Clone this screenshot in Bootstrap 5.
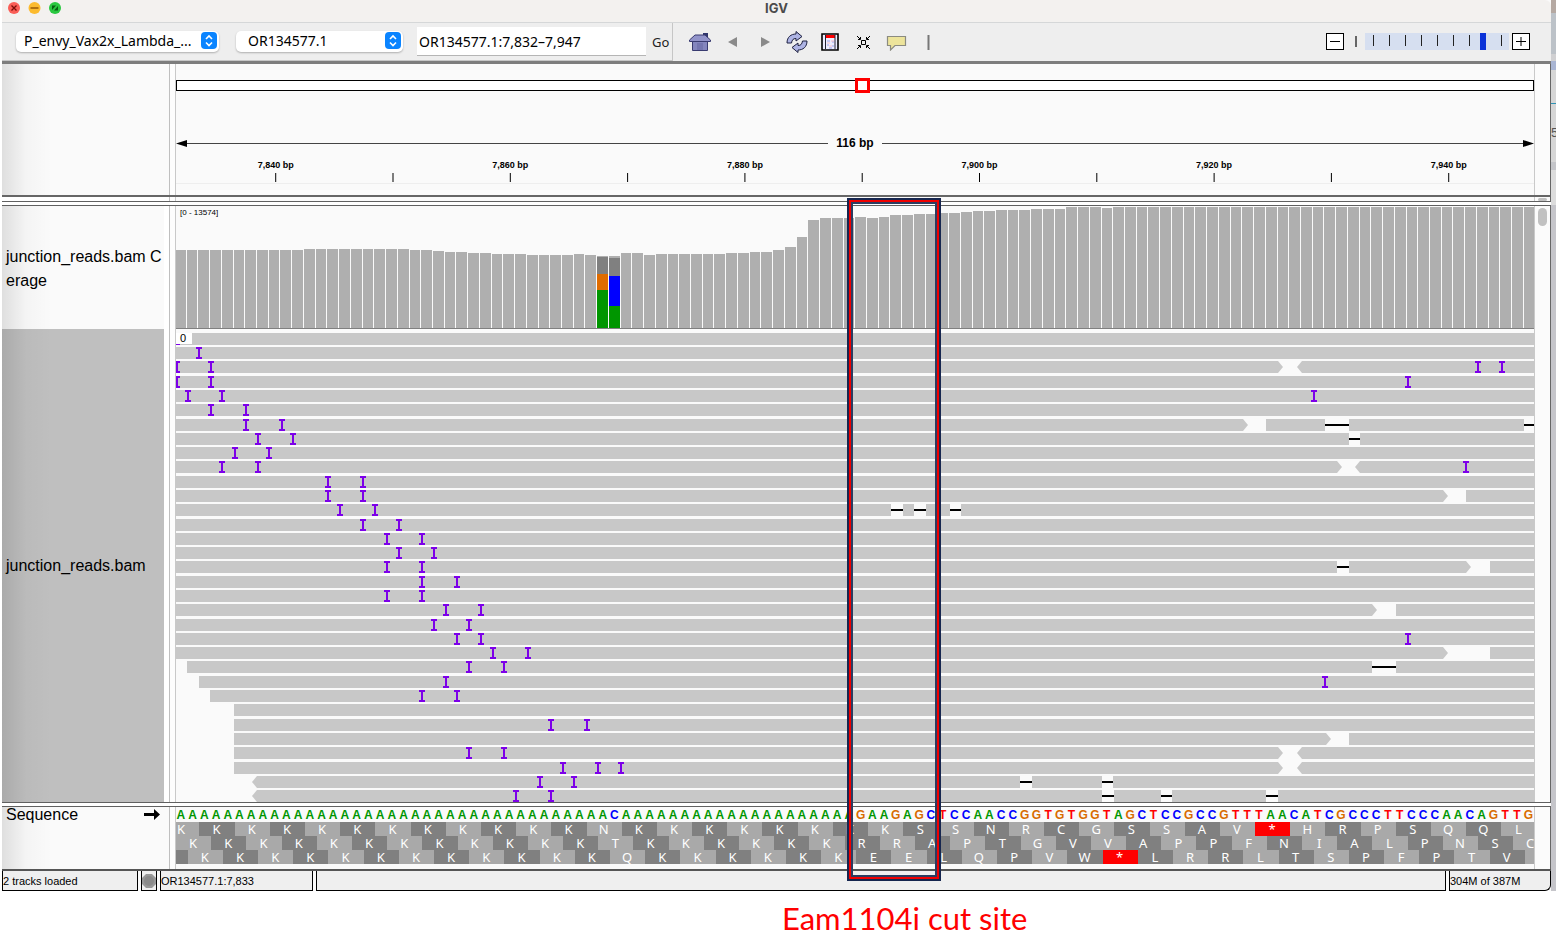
<!DOCTYPE html>
<html lang="en">
<head>
<meta charset="utf-8">
<meta name="viewport" content="width=device-width, initial-scale=1">
<title>IGV</title>
<link href="https://cdn.jsdelivr.net/npm/bootstrap@5.3.0/dist/css/bootstrap.min.css" rel="stylesheet">
<style>
body{font-family:"Liberation Sans",Arial,sans-serif;color:#000;background:#fff;overflow-x:hidden}
.igv-window{background:#fafafa;margin-left:2px;min-width:0}
.desk{width:5px;background:linear-gradient(#b5a9a2 0 13px,#bcc2c8 13px 54px,#d0d0d2 54px 61px,#a9b5d3 61px 70px,#d6d6d6 70px 103px,#2f93b5 103px 104px,#d6d6d6 104px 162px,#c4c5c9 162px 170px,#dcdcdc 170px 205px,#c5c5ca 205px);font-size:13px;color:#555}
.desk span{display:block;padding-top:123px}
.titlebar{height:22px;background:#f3f1ef;font:bold 13px/16px Inter,sans-serif;color:#4b4b4b;position:relative;border-radius:0 6px 0 0}
.lights{position:absolute;left:6px;top:2px}
.tools{height:39px;background:#eee;border-top:1px solid #d5d7d8;font-family:"Noto Sans",sans-serif;font-size:14px}
.finder{border-right:1px solid #c6c6c6;border-bottom:1px solid #c6c6c6}
.drop{position:relative;height:21px;width:203px;margin:0 17px 2px 14px}
.drop select{appearance:none;width:100%;height:21px;border:0;border-radius:5px;background:#fff;box-shadow:0 1px 2px #0004;padding:0 28px 0 8px;line-height:20px;color:#000}
.drop svg{position:absolute;right:1px;top:2px;pointer-events:none}
.drop.chrom{width:167px;margin:0 14px 2px 0}
.drop.chrom select{padding-left:12px}
.locus{width:229px;height:29px;border:0;border-bottom:1px solid #b5b5b5;background:#fff;padding:0 2px;color:#000}
.plain{border:0;background:none;padding:0;color:#222;line-height:0}
.go{font-size:13px;line-height:20px;padding:0 3px 0 6px}
.icons .plain svg,.icons>svg{display:block}
.zoombtn{width:18px;height:17px;border:1px solid #000;background:#fff;padding:0;line-height:0}
.zoomer{appearance:none;width:144px;height:17px;margin:0;background:repeating-linear-gradient(90deg,transparent 0 8px,#222 8px 9px,transparent 9px 16px) 0 2px/100% 11px no-repeat #d6dff0}
.zoomer::-webkit-slider-thumb{appearance:none;width:6px;height:17px;background:#0a32d8}
.zoomer::-moz-range-thumb{width:6px;height:17px;border:0;border-radius:0;background:#0a32d8}
.darkbar{height:3px;background:#7d7d7d}
.names{width:168px;flex:none;border-right:1px solid #bfbfbf;background:#fff;overflow:hidden}
.fade-l{background-image:linear-gradient(90deg,#0000001c,#00000006 24px,transparent 50px)}
.gut{width:6px;flex:none;background:#fdfdfd;border-right:1px solid #c9c9c9}
.plot{flex:1 1 0;min-width:0;background:#fafafa;overflow:hidden;position:relative}
.rail{width:17px;flex:none;border-left:1px solid #c9c9c9;border-right:1px solid #666;background:#fbfbfb}
.head{height:131px}
.ideo{margin-top:16px;height:11px;border:1px solid #000;background:#fff;position:relative}
.view{position:absolute;left:50%;top:-3px;width:15px;height:15px;border:3px solid red;background:#fff}
.span{height:16px;margin-top:44px;font-size:12px;font-weight:bold;line-height:16px}
.rule{height:1px;background:#444}
.pane-name{width:162px;font-size:16px;line-height:24px;padding-left:4px;white-space:nowrap;overflow:hidden}
.cov{height:123px}
.pane-name.cov{padding-top:39px}
.aln{height:473px}
.range{position:absolute;left:4px;top:1px;font-size:8px;line-height:12px}
.zero{position:absolute;left:0;top:4px;width:16px;height:11px;background:#fff;font-size:11px;line-height:11px;padding-left:4px}
.edge{height:1px;background:#606060}
.seqh{height:62px}
.bases,.amino{display:flex;white-space:nowrap}
.bases{height:14px;font-size:12px;font-weight:bold;line-height:15px;margin-top:1px}
.bases span{flex:0 0 calc(100% / 115.77);text-align:center;padding-right:2px}
.amino{height:14px;font:13px/14px "Noto Sans",sans-serif;color:#fff}
.amino span{flex:0 0 calc(300% / 115.77);height:14px;text-align:center;padding-right:1px}
.amino .two{flex-basis:calc(200% / 115.77);text-align:left;padding-left:1px}
.amino .one{flex-basis:calc(100% / 115.77)}
.lt{background:#a9a9a9}.dk{background:#808080}.stop{background:red}
.bA{color:#009600}.bC{color:#00f}.bG{color:#d86c00}.bT{color:red}
.status{height:20px;background:#fafafa;font-size:11px;line-height:21px;gap:3px}
.status>div{border:1px solid #000;border-top:0;background:#efefef;white-space:nowrap}
.cut{position:absolute;top:198px;left:calc(174px + (100% - 191px) * .494);width:94px;height:683px;border:2px solid #16264f;box-shadow:inset 0 0 0 2px #f00000,inset 0 0 0 4px #2c3c60;pointer-events:none}
.note{margin-left:50%;padding:9px 0 0 4px;color:red;font:31px/36px Lato,sans-serif}
.pill{display:block;background:#c1c1c1;border-radius:5px;margin-left:3px;width:9px}
</style>
</head>
<body>
<div class="d-flex">
<main class="igv-window flex-grow-1 position-relative">
  <header class="titlebar text-center">
    <svg class="lights" width="56" height="13" viewBox="0 0 56 13">
      <circle cx="6" cy="6" r="6" fill="#fa5d56"/><path d="M3.500 3.500l5 5m0-5l-5 5" stroke="#7a0d08" stroke-width="1.300"/>
      <circle cx="26.500" cy="6" r="6" fill="#fcbb2e"/><path d="M22.500 6h8" stroke="#985a06" stroke-width="1.500"/>
      <circle cx="47" cy="6" r="6" fill="#2ac840"/><path d="M44 3.500h4L44 8zM50 8.500h-4L50 4z" fill="#075f12"/>
    </svg>IGV
  </header>
  <nav class="tools d-flex align-items-stretch">
    <div class="finder d-flex align-items-center">
      <div class="drop"><select aria-label="Genome"><option>P_envy_Vax2x_Lambda_...</option></select>
        <svg width="17" height="17" viewBox="0 0 17 17"><rect width="16" height="17" rx="4" fill="#0a84ff"/><path d="M5 7l3-3 3 3M5 10.500l3 3 3-3" fill="none" stroke="#fff" stroke-width="1.600"/></svg></div>
      <div class="drop chrom"><select aria-label="Chromosome"><option>OR134577.1</option></select>
        <svg width="17" height="17" viewBox="0 0 17 17"><rect width="16" height="17" rx="4" fill="#0a84ff"/><path d="M5 7l3-3 3 3M5 10.500l3 3 3-3" fill="none" stroke="#fff" stroke-width="1.600"/></svg></div>
      <input class="locus" aria-label="Locus" value="OR134577.1:7,832–7,947">
      <button class="plain go">Go</button>
    </div>
    <div class="icons d-flex align-items-center ms-3">
      <button class="plain" aria-label="Home"><svg width="22" height="20" viewBox="0 0 22 20"><path d="M14 4V1h5v7z" fill="#30356c"/><path d="M.500 8L6 3h10l5.500 5v1.500H.500z" fill="#9294ca" stroke="#393b70"/><path d="M3.500 9.500h15v9h-15z" fill="#8486be" stroke="#393b70"/><path d="M8 11h6v7H8z" fill="#7476b0"/></svg></button>
      <button class="plain" style="margin-left:17px" aria-label="Back"><svg width="10" height="10"><path d="M9 0v10L0 5z" fill="#8a8a8a"/></svg></button>
      <button class="plain" style="margin-left:22px" aria-label="Forward"><svg width="10" height="10"><path d="M1 0v10l9-5z" fill="#8a8a8a"/></svg></button>
      <button class="plain" style="margin-left:16px" aria-label="Refresh"><svg width="22" height="22" viewBox="0 0 22 22"><g fill="#aeb4e4" stroke="#1d2040"><path d="M1 12C1 6 5 3 10 3V.500L16 5.500 10 10V7.500C7 7.500 6 9 5.500 12z"/><path d="M21 10c0 6-4 9-9 9v2.500L6 16.500 12 12v2.500c3 0 4-1.500 4.500-4.500z"/></g></svg></button>
      <button class="plain" style="margin-left:13px" aria-label="Region of interest"><svg width="18" height="18" viewBox="0 0 18 18"><path d="M1 1h16v16H1z" fill="#eef" stroke="#000" stroke-width="1.600"/><path d="M4 2h10v3H4z" fill="red"/><path d="M4.500 2v14M14 2v14" stroke="#223"/><path d="M6 8h3m2 1h2M6 12h2m3 1h2M8 15h3" stroke="#c3c8f5" stroke-width="2"/><path d="M6 10h3m1-2h3m-5 5h3" stroke="#f3bec5"/></svg></button>
      <button class="plain" style="margin-left:17px" aria-label="Fit data"><svg width="15" height="15" viewBox="0 0 15 15" fill="none" stroke="#000"><path d="M5.500 5.500h4v4h-4zM1 1l3 3M14 1l-3 3M1 14l3-3M14 14l-3-3M2 4.500h2.500V2M13 4.500h-2.500V2M2 10.500h2.500V13M13 10.500h-2.500V13"/></svg></button>
      <button class="plain" style="margin-left:15px" aria-label="Popup text"><svg width="21" height="18" viewBox="0 0 21 18"><path d="M1.500 3.500h18v9H9L4.500 17v-4.500h-3z" fill="#ede49b" stroke="#8b8b80" stroke-width="1.200"/></svg></button>
      <svg style="margin-left:20px" width="3" height="15"><path d="M1.500 0v15" stroke="#777" stroke-width="2"/></svg>
    </div>
    <div class="d-flex align-items-center ms-auto" style="padding:0 21px 2px 0">
      <button class="zoombtn" aria-label="Zoom out"><svg width="16" height="15"><path d="M3 7.500h10" stroke="#000"/></svg></button>
      <svg style="margin:0 8px 0 11px" width="2" height="11"><path d="M1 0v11" stroke="#666" stroke-width="2"/></svg>
      <input class="zoomer" type="range" min="0" max="100" value="83" aria-label="Zoom">
      <button class="zoombtn" style="margin-left:3px" aria-label="Zoom in"><svg width="16" height="15"><path d="M3 7.500h10M8 3v9" stroke="#000"/></svg></button>
    </div>
  </nav>
  <div class="darkbar"></div>

  <section class="d-flex head">
    <div class="names fade-l" style="background-color:#fafafa"></div><div class="gut"></div>
    <div class="plot">
      <div class="ideo"><div class="view"></div></div>
      <div class="span d-flex align-items-center">
        <svg width="11" height="7"><path d="M0 3.500L11 0v7z"/></svg><div class="rule flex-grow-1"></div>
        <span class="px-2 mx-0">116 bp</span>
        <div class="rule flex-grow-1"></div><svg width="11" height="7"><path d="M11 3.500L0 0v7z"/></svg>
      </div>
      <svg id="ticks" width="100%" height="40" font-size="9" font-weight="bold" text-anchor="middle"></svg>
    </div>
    <div class="rail"></div>
  </section>
  <div style="height:2px;background:#666"></div>
  <div class="d-flex" style="height:4px"><div class="names"></div><div class="gut"></div><div class="plot"></div><div class="rail"><i class="pill" style="height:3px;margin-top:1px"></i></div></div>
  <div class="edge"></div>
  <div class="bg-white" style="height:3px"></div>
  <div class="edge"></div>

  <section class="d-flex">
    <div class="names">
      <div class="pane-name cov fade-l" style="background-color:#fafafa">junction_reads.bam C<br>erage</div>
      <div class="pane-name aln fade-l d-flex align-items-center" style="background-color:#bfbfbf">junction_reads.bam</div>
    </div>
    <div class="gut"></div>
    <div class="plot">
      <div class="cov position-relative">
        <svg id="coverage" class="d-block" width="100%" height="123" viewBox="0 0 1358 123" preserveAspectRatio="none"></svg>
        <div class="range">[0 - 13574]</div>
      </div>
      <div class="aln position-relative">
        <svg id="reads" class="d-block" width="100%" height="473" viewBox="0 0 1358 473" preserveAspectRatio="none"></svg>
        <div class="zero">0</div>
      </div>
    </div>
    <div class="rail"><i class="pill" style="height:18px;margin-top:2px"></i></div>
  </section>
  <div class="edge"></div>
  <div class="bg-white" style="height:3px"></div>
  <div class="edge"></div>

  <section class="d-flex seqh">
    <div class="names fade-l d-flex justify-content-between align-items-start" style="background-color:#fafafa;font-size:16px;line-height:16px;padding-left:4px">Sequence
      <svg style="margin:2px 9px" width="16" height="11"><path d="M0 4h10V0l6 5.500L10 11V7H0z"/></svg></div>
    <div class="gut"></div>
    <div class="plot" id="sequence"></div>
    <div class="rail"></div>
  </section>
  <div style="height:2px;background:#555"></div>
  <footer class="status d-flex">
    <div style="width:136px">2 tracks loaded</div>
    <div style="width:16px" class="d-flex align-items-center justify-content-center"><svg width="14" height="14"><path d="M4 0h6l4 4v6l-4 4H4l-4-4V4z" fill="#999"/><circle cx="7" cy="7" r="5" fill="#8a8a8a"/></svg></div>
    <div style="width:153px">OR134577.1:7,833</div>
    <div class="flex-grow-1"></div>
    <div style="width:102px;border-radius:0 0 6px 0">304M of 387M</div>
  </footer>
  <div class="cut"></div>
</main>
<aside class="desk overflow-hidden"><span>5</span></aside>
</div>
<p class="note mb-0">Eam1104i cut site</p>

<script>
const BASE = 11.73, W = 1358;
const rect = (x, y, w, h, fill) => `<rect x="${x}" y="${y}" width="${w}" height="${h}" fill="${fill}"/>`;

// ruler ticks every 10 bp, label every 20 bp
let out = '';
for (let p = 7840; p <= 7940; p += 10) {
  const x = ((p - 7832 + .5) * BASE / W * 100).toFixed(3) + '%';
  out += `<line x1="${x}" x2="${x}" y1="22" y2="31" stroke="#000"/>`;
  if (p % 20 === 0) out += `<text x="${x}" y="17">${p.toLocaleString('en-US')} bp</text>`;
}
out += '<line x1="0" x2="100%" y1="32.500" y2="32.500" stroke="#eee"/>';
document.getElementById('ticks').innerHTML = out;

// coverage heights as [height, number of bases]
const runs = [[78,11],[79,9],[78,2],[77,1],[76,2],[75,2],[74,3],[73,4],[74,1],[73,1],[72,2],[75,2],[73,1],[74,6],[75,2],[76,2],[78,1],[81,1],[91,1],[108,1],[110,3],[111,1],[110,1],[111,1],[113,2],[114,2],[115,2],[116,1],[117,2],[118,3],[119,3],[121,3],[120,1],[121,40]];
out = ''; let i = 0;
for (const [h, n] of runs) for (let k = 0; k < n && i < 116; k++, i++) {
  const x = Math.max(0, Math.floor(i * BASE - .6)), w = Math.floor((i + 1) * BASE - .6) - x - 1;
  out += rect(x, 122 - h, w, h, '#afafaf');
  if (i === 36) out += rect(x, 51, w, 17, '#808080') + rect(x, 68, w, 16, '#e06c00') + rect(x, 84, w, 38, '#009600');
  if (i === 37) out += rect(x, 52, w, 18, '#808080') + rect(x, 70, w, 30, '#00f') + rect(x, 100, w, 22, '#009600');
}
out += rect(0, 122, W, 1, '#808080');
document.getElementById('coverage').innerHTML = out;

// aligned reads: i = insertions, d = deletions, g = read end then next read, x = two facing read ends
const reads = {
 0:{},1:{i:[23]},2:{i:[1,35,1302,1326],x:[[1102,1126]]},3:{i:[1,35,1232]},4:{i:[12,46,1138]},5:{i:[35,70]},
 6:{i:[70,106],g:[[1067,1090]],d:[[1149,1173],[1348,1358]]},7:{i:[82,117],d:[[1173,1184]]},8:{i:[59,93]},
 9:{i:[46,82,1290],x:[[1161,1184]]},10:{i:[152,187]},11:{i:[152,187],g:[[1267,1290]]},12:{i:[164,199],d:[[715,727],[738,750],[774,785]]},
 13:{i:[187,223]},14:{i:[211,246]},15:{i:[223,258]},16:{i:[211,246],d:[[1161,1173]],g:[[1290,1314]]},17:{i:[246,281]},18:{i:[211,246]},
 19:{i:[270,305],g:[[1196,1220]]},20:{i:[258,293]},21:{i:[281,305,1232]},22:{i:[317,352],g:[[1267,1314]]},
 23:{s:11,i:[293,328],d:[[1196,1220]]},24:{s:23,i:[270,1149]},25:{s:34,i:[246,281]},26:{s:58},27:{s:58,i:[375,411]},
 28:{s:58,g:[[1150,1173]]},29:{s:58,i:[293,328],x:[[1102,1126]]},30:{s:58,i:[387,422,445],x:[[1102,1126]]},
 31:{s:76,t:1,i:[364,398],d:[[844,856],[926,937]]},32:{s:76,t:1,i:[340,375],d:[[926,938],[985,996],[1090,1102]]}};
out = '';
for (let r = 0; r < 33; r++) {
  const o = reads[r], y = Math.round(3.8 + 14.29 * r), s = o.s || 0, b = y + 12, m = y + 6, bg = '#fafafa';
  out += o.t ? `<path d="M${W} ${y}H${s + 5}L${s} ${m}L${s + 5} ${b}H${W}z" fill="#c8c8c8"/>` : rect(s, y, W - s, 12, '#c8c8c8');
  for (const [a, e] of o.g || []) out += `<path d="M${a} ${y}H${e}V${b}H${a}L${a + 5} ${m}z" fill="${bg}"/>`;
  for (const [a, e] of o.x || []) out += `<path d="M${a} ${y}H${e}L${e - 5} ${m}L${e} ${b}H${a}L${a + 5} ${m}z" fill="${bg}"/>`;
  for (const [a, e] of o.d || []) out += rect(a, y, e - a, 12, bg) + rect(a, y + 5, e - a, 2, '#000');
  for (const c of o.i || []) out += `<path d="M${c - 3} ${y}h6v2h-2v8h2v2h-6v-2h2v-8h-2z" fill="#7c00e8"/>`;
}
out += rect(0, 15, 4, 1, '#7c00e8');
document.getElementById('reads').innerHTML = out;

// reference bases and the three reading frames
const seq = 'A'.repeat(37) + 'C' + 'A'.repeat(20) + 'GAAGAGCTCCAACCGGTGTGGTAGCTCCGCCGTTTAACATCGCCCTTCCCAACAGTTG';
const frames = [
  'K'.repeat(12) + 'N' + 'K'.repeat(8) + 'SSNRCGSSAV*HRPSQQL',
  'K'.repeat(12) + 'T' + 'K'.repeat(6) + 'RRAPTGVVAPPFNIALPNSC',
  'K'.repeat(12) + 'Q' + 'K'.repeat(6) + 'EELQPVW*LRRLTSPFPTV '];
out = '<div class="bases">' + [...seq].map(c => `<span class="b${c}">${c}</span>`).join('') + '</div>';
frames.forEach((f, n) => {
  out += '<div class="amino">' + (n === 2 ? '<span class="one dk"></span>' : '') + [...f].map((c, k) =>
    `<span class="${c === '*' ? 'stop' : k % 2 ? 'dk' : 'lt'}${n === 0 && k === 0 ? ' two' : ''}">${c}</span>`).join('') + '</div>';
});
document.getElementById('sequence').innerHTML = out;
</script>
<script src="https://cdn.jsdelivr.net/npm/bootstrap@5.3.0/dist/js/bootstrap.bundle.min.js"></script>
</body>
</html>
